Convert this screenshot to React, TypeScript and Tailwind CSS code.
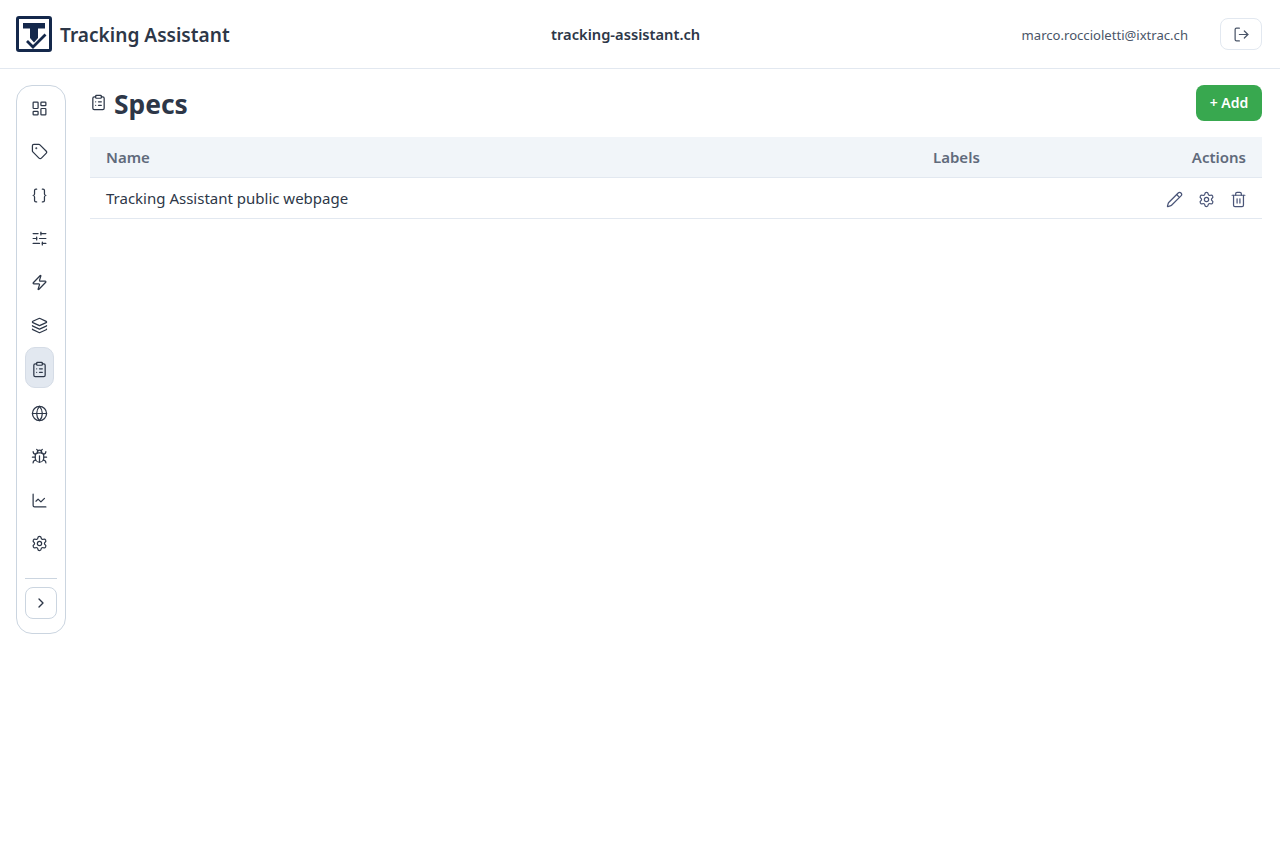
import { Bug, Braces, ChartLine, ChevronRight, ClipboardList, Globe, Layers, LayoutDashboard, LogOut, Pencil, Settings, SlidersHorizontal, Tag, Trash2, Zap } from "lucide-react"

const navItems = [
  { icon: LayoutDashboard },
  { icon: Tag },
  { icon: Braces },
  { icon: SlidersHorizontal },
  { icon: Zap },
  { icon: Layers },
  { icon: ClipboardList, active: true },
  { icon: Globe },
  { icon: Bug },
  { icon: ChartLine },
  { icon: Settings },
]

const Logo = () => (
  <svg width="36" height="36" viewBox="0 0 36 36" fill="none">
    <rect x="1.5" y="1.5" width="33" height="33" rx="1.5" stroke="#14284b" strokeWidth="3" />
    <path d="M7 7h22v5.5h-7v9.5l-4 4.5-4-4.5v-9.5H7z" fill="#14284b" />
    <path d="M11 25l6 6 12.5-12.5" stroke="#14284b" strokeWidth="2.8" />
  </svg>
)

export default function App() {
  return (
    <div className="min-h-[846px] bg-white font-['Noto_Sans',sans-serif] text-[#2d3748]">
      <header className="relative flex h-[69px] items-center justify-between border-b border-[#e2e8f0] pl-4 pr-[18px]">
        <div className="flex items-center gap-2">
          <Logo />
          <span className="pt-[3px] text-[19.1px] font-semibold">Tracking Assistant</span>
        </div>
        <span className="absolute left-[551px] text-[14.7px] font-semibold">tracking-assistant.ch</span>
        <div className="flex items-center gap-8">
          <span className="pt-[3px] text-[13.1px] text-[#4a5568]">marco.roccioletti@ixtrac.ch</span>
          <button className="flex h-8 w-[42px] items-center justify-center rounded-lg border border-[#e2e8f0]">
            <LogOut size={17} strokeWidth={1.75} color="#4a5568" />
          </button>
        </div>
      </header>
      <div className="flex items-start gap-6 pl-4 pr-[18px] pt-4">
        <aside className="flex h-[549px] w-[50px] shrink-0 flex-col items-start rounded-2xl border border-[#cbd5e0] px-2 pt-[2px]">
          <div className="flex w-full flex-col items-start gap-[3.6px]">
            {navItems.map((item, i) => (
              <div key={i} className={item.active ? "-mt-[2.6px] mb-[1.6px] flex h-[41px] w-[29px] items-center justify-center rounded-[10px] border border-[#d5dce6] bg-[#e2e8f0] pt-[4px]" : "flex h-10 w-[29px] items-center justify-center"}>
                <item.icon size={17} strokeWidth={1.75} color="#2d3748" />
              </div>
            ))}
          </div>
          <div className="mb-2 mt-[14px] h-px w-8 bg-[#cbd5e0]" />
          <button className="flex h-8 w-8 items-center justify-center rounded-lg border border-[#cbd5e0]">
            <ChevronRight size={16} color="#2d3748" />
          </button>
        </aside>
        <main className="min-w-0 flex-1">
          <div className="flex h-9 items-center justify-between">
            <div className="flex items-center gap-[7px]">
              <ClipboardList size={17} strokeWidth={1.75} color="#2d3748" className="-mt-px" />
              <h1 className="pt-[4px] text-[26.4px] font-bold">Specs</h1>
            </div>
            <button className="h-9 w-[66px] rounded-lg bg-[#38a84f] pb-[2px] text-[14px] font-semibold text-white">+ Add</button>
          </div>
          <table className="mt-4 w-full border-collapse text-[15px]">
            <thead>
              <tr className="h-10 border-b border-[#e2e8f0] bg-[#f1f5f9] text-[#606a7b]">
                <th className="px-4 text-left font-semibold">Name</th>
                <th className="w-[129px] text-left font-semibold">Labels</th>
                <th className="w-[200px] px-4 text-right font-semibold">Actions</th>
              </tr>
            </thead>
            <tbody>
              <tr className="h-[41px] border-b border-[#e2e8f0]">
                <td className="px-4 pt-px">Tracking Assistant public webpage</td>
                <td></td>
                <td className="px-4 pt-[4px]">
                  <div className="-mr-px flex items-center justify-end gap-[15px] text-[#4a5578]">
                    <Pencil size={17} strokeWidth={1.75} />
                    <Settings size={17} strokeWidth={1.75} />
                    <Trash2 size={17} strokeWidth={1.75} />
                  </div>
                </td>
              </tr>
            </tbody>
          </table>
        </main>
      </div>
    </div>
  )
}
